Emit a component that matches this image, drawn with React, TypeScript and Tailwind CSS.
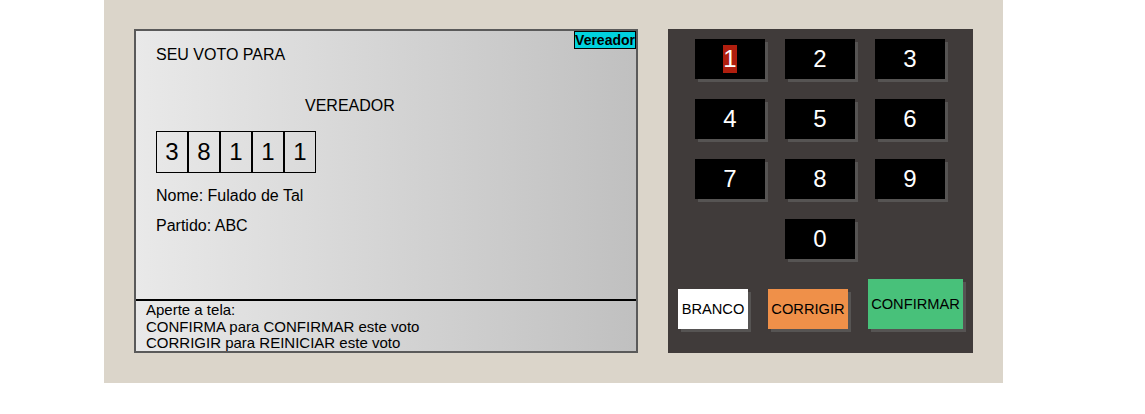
import React from "react";

const keys = ["1", "2", "3", "4", "5", "6", "7", "8", "9"];

function Key({ d }: { d: string }) {
  return (
    <div className="w-[70px] h-[40px] bg-black shadow-[3px_3px_0_#565453] flex items-center justify-center text-white text-[24px] leading-[28px]">
      {d === "1" ? <span className="bg-[#b01e0e] h-[28px]">{d}</span> : <span>{d}</span>}
    </div>
  );
}

export default function App() {
  return (
    <div className="w-[1145px] h-[414px] bg-white font-['Liberation_Sans',Arial,sans-serif] text-black">
      <div className="ml-[104px] w-[899px] h-[383px] bg-[#dbd5ca] pt-[29px] pl-[30px] flex gap-[30px]">
        {/* Screen */}
        <div className="w-[504px] h-[324px] border-2 border-[#5a5a5a] bg-linear-to-r from-[#e9e9e9] to-[#c0c0c0] flex flex-col">
          <div className="relative h-[268px] pl-[20px] pt-[15px] text-[16px] leading-[18px]">
            <div className="absolute top-0 right-0 h-[18px] border border-black bg-[#00d2de] text-[14px] leading-[16px] font-bold">
              Vereador
            </div>
            <div>SEU VOTO PARA</div>
            <div className="mt-[33px] ml-[149px]">VEREADOR</div>
            <div className="mt-[16px] flex">
              {["3", "8", "1", "1", "1"].map((n, i) => (
                <div
                  key={i}
                  className="w-[32px] h-[42px] border border-black flex items-center justify-center text-[24px] leading-[28px]"
                >
                  {n}
                </div>
              ))}
            </div>
            <div className="mt-[14px]">Nome: Fulado de Tal</div>
            <div className="mt-[12px]">Partido: ABC</div>
          </div>
          <div className="border-t-2 border-black" />
          <div className="h-[50px] pl-[10px] pt-[1px] text-[15px] leading-[16.7px] overflow-hidden">
            <div>Aperte a tela:</div>
            <div>CONFIRMA para CONFIRMAR este voto</div>
            <div>CORRIGIR para REINICIAR este voto</div>
          </div>
        </div>

        {/* Keypad */}
        <div className="w-[305px] h-[324px] bg-[#403b3a] pt-[10px] pl-[27px] flex flex-col">
          <div className="grid grid-cols-[70px_70px_70px] gap-[20px]">
            {keys.map((k) => (
              <Key key={k} d={k} />
            ))}
            <div className="col-start-2">
              <Key d="0" />
            </div>
          </div>
          <div className="mt-[20px] -ml-[17px] flex items-end gap-[20px] text-[14.67px] leading-[17px]">
            <div className="w-[70px] h-[40px] bg-white shadow-[3px_3px_0_#565453] flex items-center justify-center">
              BRANCO
            </div>
            <div className="w-[80px] h-[40px] bg-[#ef9049] shadow-[3px_3px_0_#565453] flex items-center justify-center">
              CORRIGIR
            </div>
            <div className="w-[95px] h-[50px] bg-[#48c17a] shadow-[3px_3px_0_#565453] flex items-center justify-center">
              CONFIRMAR
            </div>
          </div>
        </div>
      </div>
    </div>
  );
}
